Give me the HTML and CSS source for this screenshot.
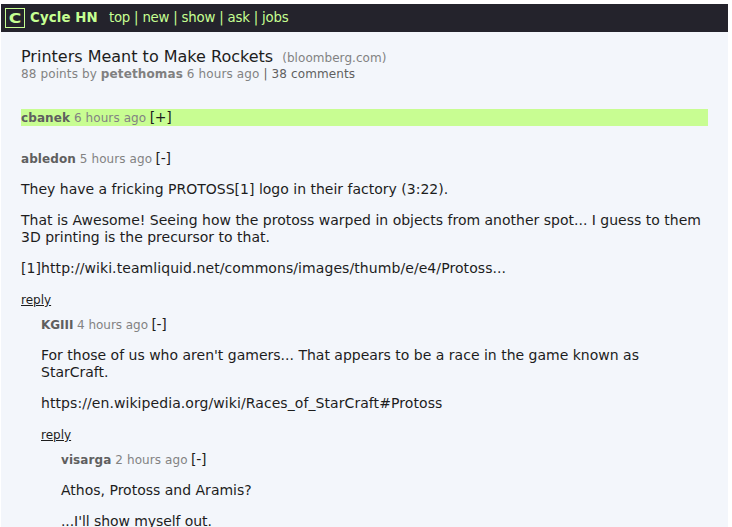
FILE: index.html
```html
<!DOCTYPE html>
<html lang="en">
<head>
<meta charset="utf-8">
<title>Cycle HN</title>
<link rel="stylesheet" href="styles.css">
</head>
<body>
<div class="app">
<header class="nav"><span class="logo"><span class="letter">C</span></span><b class="brand">Cycle HN</b><nav><a>top</a> | <a>new</a> | <a>show</a> | <a>ask</a> | <a>jobs</a></nav></header>
<main class="content">
<div class="title">Printers Meant to Make Rockets <span class="domain">(bloomberg.com)</span></div>
<div class="meta">88 points by <b>petethomas</b> 6 hours ago <span class="count">| 38 comments</span></div>
<section class="comment collapsed"><div class="head"><span class="by"><b>cbanek</b> 6 hours ago</span><span class="toggle">[+]</span></div></section>
<section class="comment">
<div class="head"><span class="by"><b>abledon</b> 5 hours ago</span><span class="toggle">[-]</span></div>
<p>They have a fricking PROTOSS[1] logo in their factory (3:22).</p>
<p>That is Awesome! Seeing how the protoss warped in objects from another spot... I guess to them 3D printing is the precursor to that.</p>
<p class="link">[1]http://wiki.teamliquid.net/commons/images/thumb/e/e4/Protoss...</p>
<a class="reply">reply</a>
<section class="child">
<div class="head"><span class="by tight"><b>KGIII</b> 4 hours ago</span><span class="toggle">[-]</span></div>
<p>For those of us who aren't gamers... That appears to be a race in the game known as StarCraft.</p>
<p class="link">https://en.wikipedia.org/wiki/Races_of_StarCraft#Protoss</p>
<a class="reply">reply</a>
<section class="child">
<div class="head"><span class="by"><b>visarga</b> 2 hours ago</span><span class="toggle">[-]</span></div>
<p>Athos, Protoss and Aramis?</p>
<p class="last">...I'll show myself out.</p>
</section>
</section>
</section>
</main>
</div>
</body>
</html>
```
FILE: styles.css
```css
html { background: #fff; overflow: hidden; height: 100%; }
body { margin: 0; height: 527px; overflow: hidden; font: 14px/17px "DejaVu Sans", sans-serif; color: #1d1d1d; }
.app { margin: 4px 4px 0 1px; }
.nav { height: 28px; background: #24232c; color: #c6ff92; display: flex; align-items: center; font-size: 13.333px; }
.nav nav { letter-spacing: -0.22px; padding-bottom: 1px; }
.logo { width: 18px; height: 18px; border: 1px solid #c6ff92; margin: 0 5px 0 4px; display: flex; align-items: center; justify-content: center; }
.letter { font-weight: bold; font-size: 14px; line-height: 18px; transform: scaleX(1.22); }
.brand { margin-right: 11px; letter-spacing: 0.12px; padding-bottom: 1px; }
.content { background: #f3f6fb; padding: 15px 20px 0; height: 480px; }
.title { font-size: 16px; line-height: 19px; }
.domain { font-size: 12px; color: #828282; margin-left: 4px; letter-spacing: 0.05px; }
.meta { font-size: 12px; line-height: 15px; margin-top: -1px; color: #828282; letter-spacing: 0.12px; }
.by b, .count { color: #5f5f5f; }
.meta b { color: #808080; }
.comment { margin-top: 24px; }
.collapsed { margin-top: 27px; background: #c8fd92; }
.head { height: 17px; }
.by { font-size: 12px; color: #828282; letter-spacing: 0.09px; }
.tight { letter-spacing: -0.04px; }
.toggle { margin-left: 3.4px; letter-spacing: -0.3px; }
p { margin: 14px 0; }
.link { letter-spacing: 0.075px; }
.last { letter-spacing: -0.08px; }
.reply { display: block; font-size: 12px; line-height: 17px; margin-top: 15px; text-decoration: underline; }
.child { margin: 7px 0 0 20px; }
```
